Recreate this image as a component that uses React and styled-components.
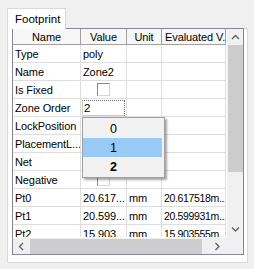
import React from "react";
import styled, { createGlobalStyle } from "styled-components";

const GlobalStyle = createGlobalStyle`
  html, body { margin: 0; padding: 0; background: #f0f0f0; }
  body { font-family: "Liberation Sans", Arial, sans-serif; font-size: 11px; color: #000; }
`;

const Page = styled.div`
  width: 254px;
  height: 269px;
  padding-top: 8px;
  box-sizing: border-box;
  background: #f0f0f0;
  overflow: hidden;
`;

const TabStrip = styled.div`
  display: flex;
  padding-left: 7px;
  height: 20px;
  position: relative;
  z-index: 1;
`;

const Tab = styled.div`
  height: 21px;
  box-sizing: border-box;
  padding: 3px 5px 0 7px;
  background: #ffffff;
  border: 1px solid #d9d9d9;
  border-bottom: none;
  font-size: 11.5px;
  line-height: 15px;
`;

const Panel = styled.div`
  margin-left: 7px;
  width: 241px;
  height: 235px;
  box-sizing: border-box;
  border: 1px solid #d9d9d9;
  background: #ffffff;
  padding: 0 3px 7px 4px;
`;

const Grid = styled.div`
  position: relative;
  margin-top: -1px;
  width: 232px;
  height: 227px;
  box-sizing: border-box;
  border: 1px solid #828790;
  display: grid;
  grid-template-columns: 213px 17px;
  grid-template-rows: 208px 17px;
  background: #f0f0f0;
`;

const Body = styled.div`
  overflow: hidden;
  background: #ffffff;
`;

const Row = styled.div`
  display: flex;
  height: ${(p) => (p.$header ? 16 : 18)}px;
  box-sizing: border-box;
  border-bottom: 1px solid ${(p) => (p.$header ? "#a0a0a0" : "#dedede")};
  background: ${(p) => (p.$header ? "#f7f7f7" : "#ffffff")};
`;

const Cell = styled.div`
  flex: 0 0 ${(p) => p.$w}px;
  width: ${(p) => p.$w}px;
  box-sizing: border-box;
  border-right: 1px solid ${(p) => (p.$header ? "#a0a0a0" : "#dedede")};
  padding: 0 ${(p) => (p.$header ? 3 : 2)}px;
  display: flex;
  align-items: center;
  justify-content: ${(p) => (p.$center ? "center" : "flex-start")};
  white-space: nowrap;
  overflow: hidden;
  font-size: ${(p) => (p.$tight ? 10.5 : 11)}px;
  letter-spacing: ${(p) => (p.$tight ? -0.35 : -0.1)}px;
  position: relative;
`;

const Check = styled.div`
  width: 13px;
  height: 13px;
  box-sizing: border-box;
  border-top: 1px solid #8a8a8a;
  border-left: 1px solid #8a8a8a;
  border-right: 1px solid #d6d6d6;
  border-bottom: 1px solid #d6d6d6;
  background: #ffffff;
`;

const Editor = styled.div`
  position: absolute;
  left: 1px;
  top: 1px;
  right: 1px;
  bottom: 0;
  box-sizing: border-box;
  border: 1px solid #c8c8c8;
  border-top: 1px dotted #6a6a6a;
  border-right: 1px dotted #6a6a6a;
  padding-left: 1px;
  display: flex;
  align-items: center;
  font-size: 11.5px;
`;

const Dropdown = styled.div`
  position: absolute;
  left: 69px;
  top: 88px;
  width: 83px;
  box-sizing: border-box;
  border: 1px solid #a0a0a0;
  background: #f2f2f2;
  padding: 1px 2px 1px 0;
  box-shadow: 2px 2px 2px rgba(0, 0, 0, 0.35);
  z-index: 2;
`;

const Item = styled.div`
  height: 19px;
  display: flex;
  align-items: center;
  justify-content: center;
  padding-right: 18px;
  font-size: 12.5px;
  font-weight: ${(p) => (p.$bold ? 700 : 400)};
  background: ${(p) => (p.$active ? "#99c9f5" : "transparent")};
  color: #000;
`;

const VScroll = styled.div`
  display: flex;
  flex-direction: column;
  background: #f0f0f0;
  border-left: 1px solid #ffffff;
`;

const HScroll = styled.div`
  display: flex;
  background: #f0f0f0;
  border-top: 1px solid #ffffff;
`;

const Arrow = styled.div`
  flex: 0 0 ${(p) => (p.$h ? 17 : 16)}px;
  display: flex;
  align-items: center;
  justify-content: center;
`;

const Thumb = styled.div`
  background: #cdcdcd;
  ${(p) => (p.$h ? "height: 15px; margin-top: 1px;" : "width: 15px; margin-left: 1px;")}
  flex: 0 0 ${(p) => p.$len}px;
`;

const Track = styled.div`
  flex: 1 1 auto;
`;

const Corner = styled.div`
  background: #f0f0f0;
`;

const Chevron = ({ dir }) => {
  const d = {
    up: "M1 5 L4.5 1.5 L8 5",
    down: "M1 1.5 L4.5 5 L8 1.5",
    left: "M5 1 L1.5 4.5 L5 8",
    right: "M1.5 1 L5 4.5 L1.5 8",
  }[dir];
  const vertical = dir === "up" || dir === "down";
  return (
    <svg width={vertical ? 9 : 7} height={vertical ? 7 : 9} viewBox={vertical ? "0 0 9 7" : "0 0 7 9"}>
      <path d={d} fill="none" stroke="#606060" strokeWidth="1.3" />
    </svg>
  );
};

const W = [68, 46, 35, 64];

const rows = [
  ["Type", "poly", "", ""],
  ["Name", "Zone2", "", ""],
  ["Is Fixed", "check", "", ""],
  ["Zone Order", "edit", "", ""],
  ["LockPosition", "", "", ""],
  ["PlacementL...", "", "", ""],
  ["Net", "", "", ""],
  ["Negative", "check", "", ""],
  ["Pt0", "20.617...", "mm", "20.617518m..."],
  ["Pt1", "20.599...", "mm", "20.599931m..."],
  ["Pt2", "15.903...", "mm", "15.903555m..."],
];

export default function App() {
  return (
    <Page>
      <GlobalStyle />
      <TabStrip>
        <Tab>Footprint</Tab>
      </TabStrip>
      <Panel>
        <Grid>
          <Body>
            <Row $header>
              <Cell $w={W[0]} $header $center>Name</Cell>
              <Cell $w={W[1]} $header $center>Value</Cell>
              <Cell $w={W[2]} $header $center>Unit</Cell>
              <Cell $w={W[3]} $header>Evaluated V.</Cell>
            </Row>
            {rows.map((r) => (
              <Row key={r[0]}>
                <Cell $w={W[0]}>{r[0]}</Cell>
                <Cell $w={W[1]} $center={r[1] === "check"}>
                  {r[1] === "check" ? <Check /> : r[1] === "edit" ? <Editor>2</Editor> : r[1]}
                </Cell>
                <Cell $w={W[2]}>{r[2]}</Cell>
                <Cell $w={W[3]} $tight>{r[3]}</Cell>
              </Row>
            ))}
          </Body>
          <VScroll>
            <Arrow><Chevron dir="up" /></Arrow>
            <Thumb $len={127} />
            <Track />
            <Arrow><Chevron dir="down" /></Arrow>
          </VScroll>
          <HScroll>
            <Arrow $h><Chevron dir="left" /></Arrow>
            <Thumb $h $len={172} />
            <Track />
            <Arrow $h><Chevron dir="right" /></Arrow>
          </HScroll>
          <Corner />
          <Dropdown>
            <Item>0</Item>
            <Item $active>1</Item>
            <Item $bold>2</Item>
          </Dropdown>
        </Grid>
      </Panel>
    </Page>
  );
}
